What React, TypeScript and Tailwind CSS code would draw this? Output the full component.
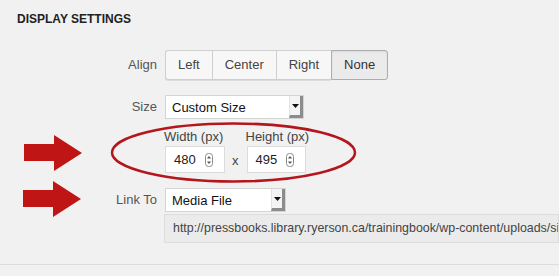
import React from "react";

function SelectBox(props: { value: string; width: string }) {
  return (
    <div
      className={`flex h-[24px] ${props.width} items-stretch border border-[#d4d4d4] bg-white text-[13px] text-[#111]`}
    >
      <div className="flex flex-1 items-center pl-[6px] leading-none">{props.value}</div>
      <div className="flex w-[14px] items-center justify-center border-r-[3px] border-b-[3px] border-l border-[#8c8c8c] border-l-[#e2e2e2] bg-[#f4f4f4]">
        <svg width="7" height="4" viewBox="0 0 7 4">
          <polygon points="0,0 7,0 3.5,4" fill="#111" />
        </svg>
      </div>
    </div>
  );
}

function Spinner() {
  return (
    <svg width="8" height="14" viewBox="0 0 8 14">
      <rect x="0.5" y="0.5" width="7" height="13" rx="3" fill="none" stroke="#8a8a8a" />
      <polygon points="2,5.5 6,5.5 4,3" fill="#555" />
      <polygon points="2,8.5 6,8.5 4,11" fill="#555" />
    </svg>
  );
}

function NumberBox(props: { value: string; width: string }) {
  return (
    <div
      className={`flex h-[27px] ${props.width} items-center justify-between border border-[#dcdcdc] bg-white pr-[11px] pl-[8px] text-[13px] text-[#222]`}
    >
      <span>{props.value}</span>
      <Spinner />
    </div>
  );
}

const ALIGN = ["Left", "Center", "Right", "None"];

export default function App() {
  return (
    <div className="relative h-[276px] w-[559px] overflow-hidden bg-[#f1f1f1] font-['Liberation_Sans',Arial,sans-serif]">
      <h2 className="pt-[12px] pl-[17px] text-[12px] leading-[15px] font-bold text-[#1d2226]">
        DISPLAY SETTINGS
      </h2>

      <div className="mt-[23px] flex h-[30px] items-center">
        <div className="w-[157px] text-right text-[13px] text-[#555]">Align</div>
        <div className="ml-[8px] flex h-[30px]">
          {ALIGN.map((a, i) => (
            <div
              key={a}
              className={
                a === "None"
                  ? "flex items-center rounded-r-[3px] border border-[#adadad] bg-[#ebebeb] px-[12px] text-[13px] text-[#333] shadow-[inset_0_1px_2px_rgba(0,0,0,0.08)]"
                  : `flex items-center border border-r-0 border-[#cfcfcf] bg-[#f7f7f7] px-[12px] text-[13px] text-[#444] shadow-[0_1px_0_#ddd] ${i === 0 ? "rounded-l-[3px]" : ""}`
              }
            >
              {a}
            </div>
          ))}
        </div>
      </div>

      <div className="mt-[15px] flex h-[24px] items-center">
        <div className="w-[157px] text-right text-[13px] text-[#555]">Size</div>
        <div className="ml-[8px]">
          <SelectBox value="Custom Size" width="w-[139px]" />
        </div>
      </div>

      <div className="mt-[10px] ml-[164px] flex gap-[7px]">
        <div>
          <div className="h-[16px] text-[13px] leading-[16px] text-[#444]">Width (px)</div>
          <div className="mt-[1px] ml-[1px]">
            <NumberBox value="480" width="w-[60px]" />
          </div>
        </div>
        <div className="flex items-end pb-[3px] text-[13px] text-[#444]">x</div>
        <div>
          <div className="h-[16px] text-[13px] leading-[16px] text-[#444]">Height (px)</div>
          <div className="mt-[1px] ml-[1px]">
            <NumberBox value="495" width="w-[59px]" />
          </div>
        </div>
      </div>

      <div className="mt-[15px] flex h-[24px] items-center">
        <div className="w-[157px] text-right text-[13px] text-[#555]">Link To</div>
        <div className="ml-[8px]">
          <SelectBox value="Media File" width="w-[121px]" />
        </div>
      </div>

      <div className="mt-[2px] ml-[164px] flex h-[29px] items-center overflow-hidden border border-[#dcdcdc] bg-[#ebebeb] pl-[8px] text-[12.4px] whitespace-nowrap text-[#444]">
        http://pressbooks.library.ryerson.ca/trainingbook/wp-content/uploads/sites/12/2016/01/image.png
      </div>

      <div className="mt-[21px] border-t border-[#dddddd]" />

      <svg
        className="pointer-events-none absolute top-0 left-0"
        width="559"
        height="276"
        viewBox="0 0 559 276"
      >
        <ellipse cx="233.5" cy="152.5" rx="121.5" ry="29" fill="none" stroke="#b3161c" strokeWidth="2.5" />
        <polygon points="24,144 54,144 54,135 82,153 54,171 54,161 24,161" fill="#bf1515" />
        <polygon points="23,190 53,190 53,181 81,199 53,217 53,207 23,207" fill="#bf1515" />
      </svg>
    </div>
  );
}
